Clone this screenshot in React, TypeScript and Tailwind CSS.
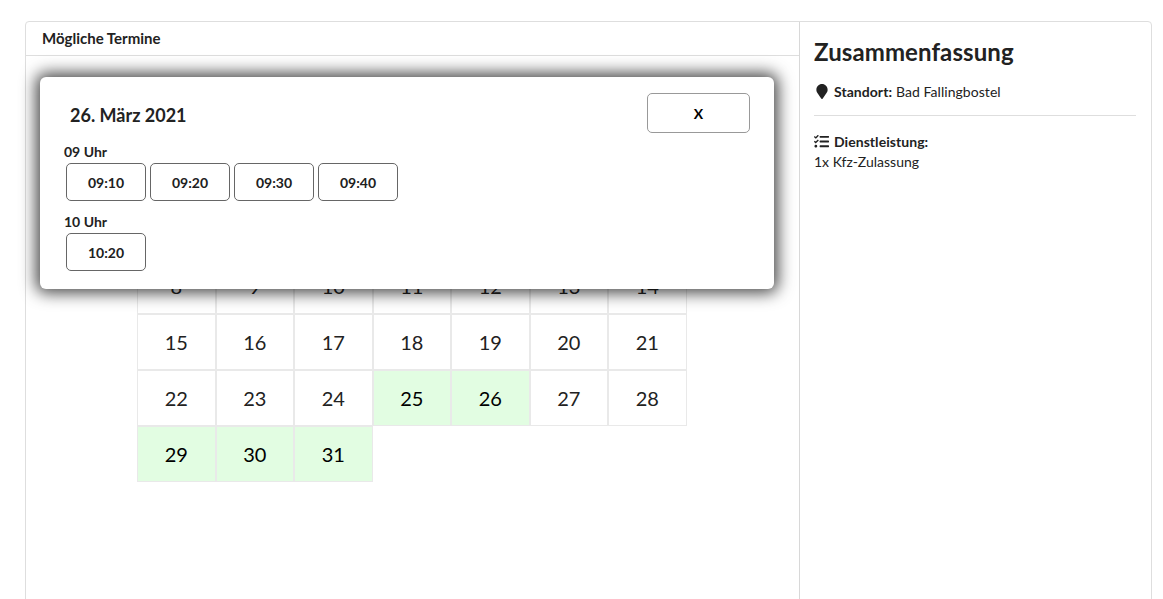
import React from "react";
import { FaMapMarker, FaTasks } from "react-icons/fa";

const weeks: number[][] = [
  [1, 2, 3, 4, 5, 6, 7],
  [8, 9, 10, 11, 12, 13, 14],
  [15, 16, 17, 18, 19, 20, 21],
  [22, 23, 24, 25, 26, 27, 28],
  [29, 30, 31],
];
const available = [25, 26, 29, 30, 31];

function Slot({ t }: { t: string }) {
  return (
    <button className="w-[80px] h-[38px] rounded-[5px] border border-[#666] bg-white text-[14px] font-bold text-[#212121] flex items-center justify-center">
      {t}
    </button>
  );
}

export default function App() {
  return (
    <div className="h-[599px] overflow-hidden bg-white pt-[21px] pl-[25px] pr-[11px] font-['Lato',sans-serif] text-[#222222]">
      <div className="flex h-[640px] rounded-[4px] border border-[#dedede]">
        <div className="relative w-[774px] shrink-0 border-r border-[#d8d8d8]">
          <div className="h-[34px] border-b border-[#dedede] pl-4 flex items-center text-[15px] font-bold">
            Mögliche Termine
          </div>
          <div className="pt-[146px] pl-[111px]">
            {weeks.map((w, i) => (
              <div key={i} className="flex h-[56px]">
                {w.map((d) => (
                  <div
                    key={d}
                    className={`w-[78.5px] h-[56px] flex items-center justify-center border border-[#e9e9e9] text-[20px] ${
                      available.includes(d) ? "bg-[#e2fde2] border-[#dbe8db] text-black" : "text-[#222222]"
                    }`}
                  >
                    {d}
                  </div>
                ))}
              </div>
            ))}
          </div>
          <div className="absolute left-[14px] top-[55px] w-[734px] h-[212px] rounded-[6px] bg-white shadow-[0_0_16px_4px_rgba(0,0,0,0.72)] pl-6 pr-6 pt-4">
            <div className="flex justify-between">
              <div className="pl-[6px] pt-[10px] text-[18px] font-bold leading-6">26. März 2021</div>
              <button className="w-[103px] h-[40px] rounded-[5px] border border-[#999] bg-white text-[14px] font-bold text-black">
                X
              </button>
            </div>
            <div className="mt-[9px] pb-[1px] text-[14px] font-bold leading-[20px]">09 Uhr</div>
            <div className="flex gap-1 pl-[2px]">
              {["09:10", "09:20", "09:30", "09:40"].map((t) => (
                <Slot key={t} t={t} />
              ))}
            </div>
            <div className="mt-[11px] pb-[1px] text-[14px] font-bold leading-[20px]">10 Uhr</div>
            <div className="flex gap-1 pl-[2px]">
              <Slot t="10:20" />
            </div>
          </div>
        </div>
        <div className="flex-1 pl-[14px] pr-[15px]">
          <div className="pt-[14px] text-[24px] tracking-[0.1px] font-bold leading-[32px]">Zusammenfassung</div>
          <div className="mt-[11px] flex items-center h-[24px] text-[14px] tracking-[0.05px]">
            <FaMapMarker className="w-[14px] h-[15px] ml-[1px] mr-[5px]" />
            <span className="font-bold mr-1">Standort:</span> Bad Fallingbostel
          </div>
          <div className="mt-[12px] border-t border-[#dedede]" />
          <div className="mt-[15px] flex items-center h-[20px] text-[14px] font-bold tracking-[0.05px]">
            <FaTasks className="w-[15px] h-[15px] mr-[5px]" />
            Dienstleistung:
          </div>
          <div className="mt-[1px] text-[14px] leading-[20px]">1x Kfz-Zulassung</div>
        </div>
      </div>
    </div>
  );
}
